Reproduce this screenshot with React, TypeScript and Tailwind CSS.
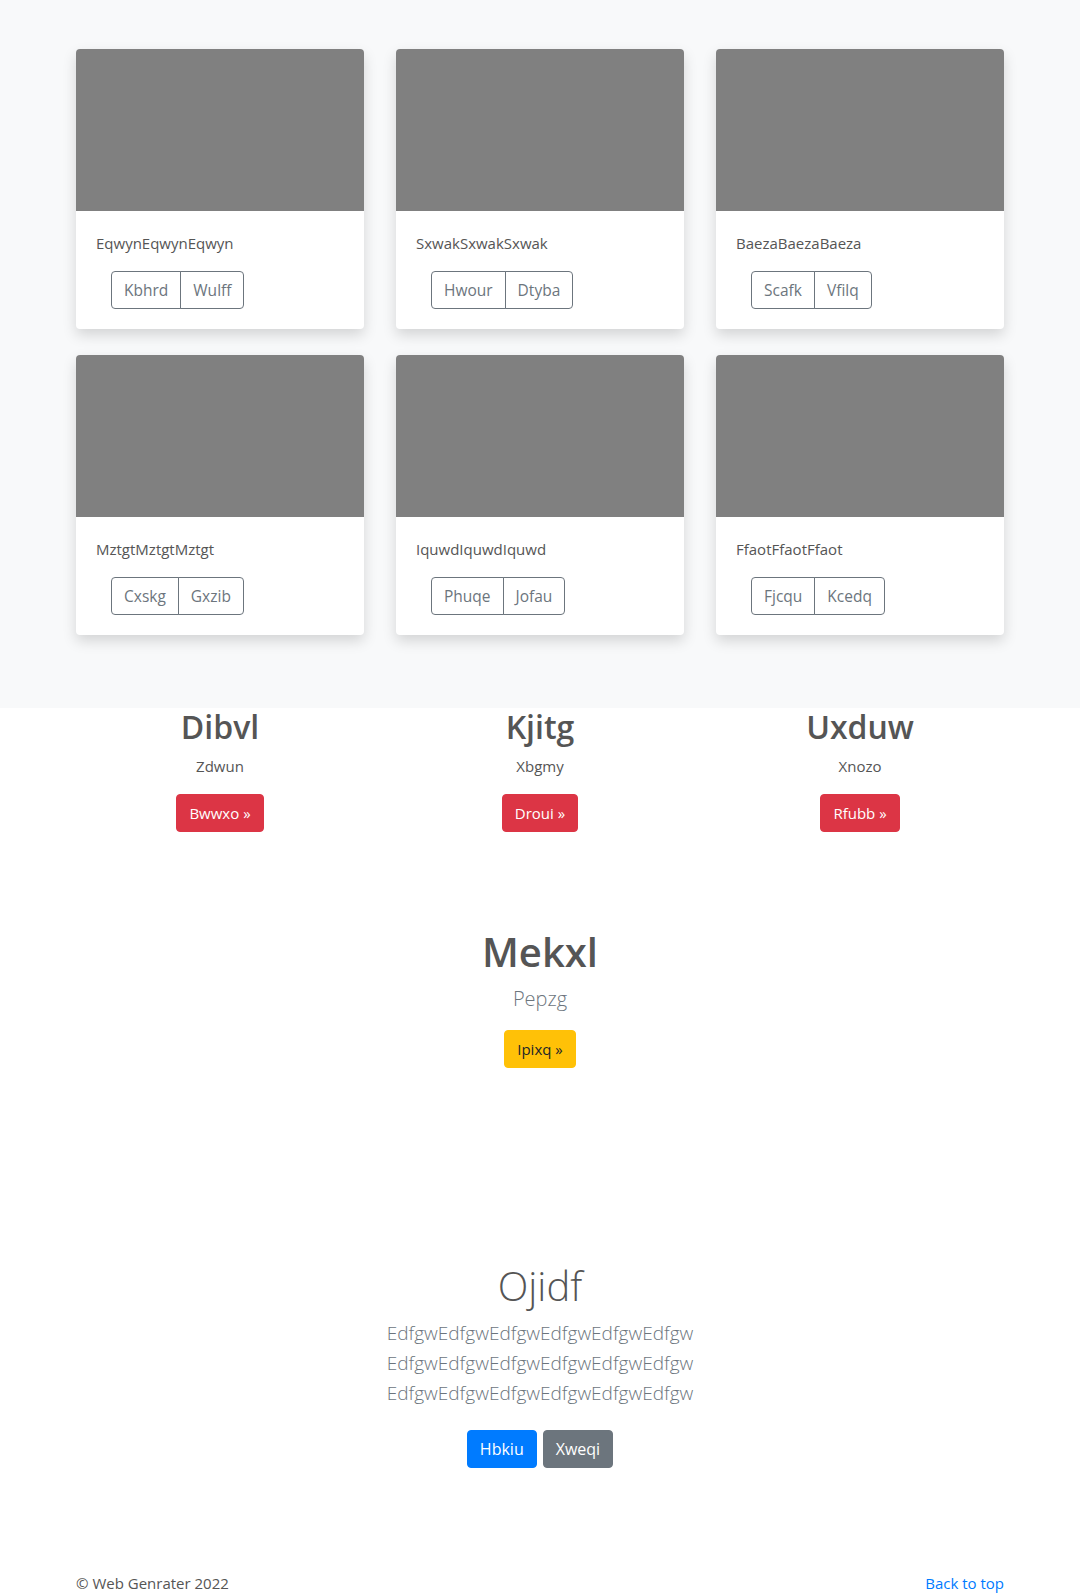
import React from "react";

type Card = { title: string; left: string; right: string };

const cards: Card[] = [
  { title: "EqwynEqwynEqwyn", left: "Kbhrd", right: "Wulff" },
  { title: "SxwakSxwakSxwak", left: "Hwour", right: "Dtyba" },
  { title: "BaezaBaezaBaeza", left: "Scafk", right: "Vfilq" },
  { title: "MztgtMztgtMztgt", left: "Cxskg", right: "Gxzib" },
  { title: "IquwdIquwdIquwd", left: "Phuqe", right: "Jofau" },
  { title: "FfaotFfaotFfaot", left: "Fjcqu", right: "Kcedq" },
];

const features = [
  { title: "Dibvl", sub: "Zdwun", cta: "Bwwxo" },
  { title: "Kjitg", sub: "Xbgmy", cta: "Droui" },
  { title: "Uxduw", sub: "Xnozo", cta: "Rfubb" },
];

function AlbumCard({ card }: { card: Card }) {
  return (
    <div className="overflow-hidden rounded bg-white shadow-[0_6px_14px_rgba(0,0,0,0.15)]">
      <div className="h-[162px] bg-[#808080]" />
      <div className="p-5">
        <p className="mb-4 text-[15px] leading-6 text-[#555]">{card.title}</p>
        <div className="ml-[15px] inline-flex">
          <button className="rounded-l border border-[#6c757d] px-3 py-1.5 text-[15.5px] leading-6 text-[#6c757d]">
            {card.left}
          </button>
          <button className="-ml-px rounded-r border border-[#6c757d] px-3 py-1.5 text-[15.5px] leading-6 text-[#6c757d]">
            {card.right}
          </button>
        </div>
      </div>
    </div>
  );
}

export default function App() {
  return (
    <div className="min-h-[1596px] bg-white font-['Open_Sans','Noto_Sans',sans-serif] text-[#555]">
      <section className="bg-[#f8f9fa] pb-[73px] pt-[49px]">
        <div className="mx-auto w-[960px] px-[16px]">
          <div className="grid grid-cols-3 gap-x-[32px] gap-y-[26px]">
            {cards.map((c) => (
              <AlbumCard key={c.title} card={c} />
            ))}
          </div>
        </div>
      </section>

      <section className="mx-auto w-[960px]">
        <div className="grid grid-cols-3">
          {features.map((f) => (
            <div key={f.title} className="flex flex-col items-center text-center">
              <h2 className="mb-2 text-[32px] font-semibold leading-[1.2] text-[#555]">{f.title}</h2>
              <p className="mb-4 text-[15px] leading-6 text-[#555]">{f.sub}</p>
              <button className="rounded border border-[#dc3545] bg-[#dc3545] px-3 py-1.5 text-[15px] leading-6 text-white">
                {f.cta} »
              </button>
            </div>
          ))}
        </div>
      </section>

      <section className="mt-[96px] flex flex-col items-center text-center">
        <h1 className="mb-2 text-[40px] font-semibold leading-[1.2] text-[#555]">Mekxl</h1>
        <p className="mb-4 text-[20px] font-light leading-[30px] text-[#6c757d]">Pepzg</p>
        <button className="rounded border border-[#ffc107] bg-[#ffc107] px-3 py-1.5 text-[15px] leading-6 text-[#212529]">
          Ipixq »
        </button>
      </section>

      <section className="mt-[194px] flex flex-col items-center text-center">
        <h1 className="mb-2 text-[40px] font-light leading-[1.2] text-[#555]">Ojidf</h1>
        <p className="w-[450px] text-[19px] font-light leading-[30px] text-[#6c757d]">
          EdfgwEdfgwEdfgwEdfgwEdfgwEdfgw EdfgwEdfgwEdfgwEdfgwEdfgwEdfgw EdfgwEdfgwEdfgwEdfgwEdfgwEdfgw
        </p>
        <div className="mt-[22px] flex gap-[6px]">
          <button className="rounded border border-[#007bff] bg-[#007bff] px-3 py-1.5 text-[16px] leading-6 text-white">
            Hbkiu
          </button>
          <button className="rounded border border-[#6c757d] bg-[#6c757d] px-3 py-1.5 text-[16px] leading-6 text-white">
            Xweqi
          </button>
        </div>
      </section>

      <footer className="mx-auto mt-[103px] flex w-[960px] justify-between px-[16px] text-[15px] leading-6">
        <p className="text-[#555]">© Web Genrater 2022</p>
        <a href="#" className="text-[#007bff]">
          Back to top
        </a>
      </footer>
    </div>
  );
}
